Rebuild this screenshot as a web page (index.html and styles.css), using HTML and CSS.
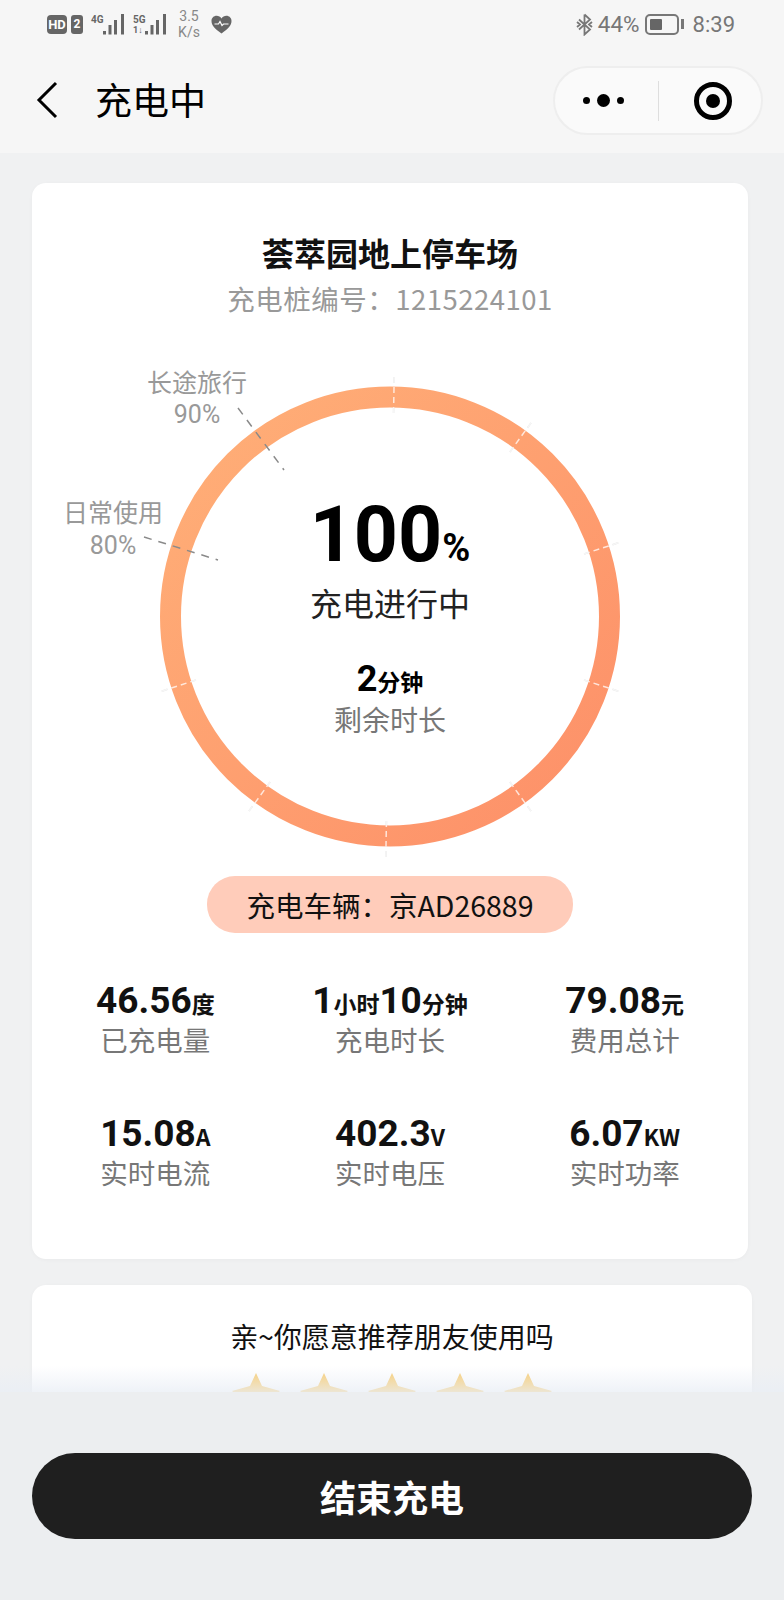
FILE: index.html
```html
<!DOCTYPE html>
<html lang="zh-CN">
<head>
    <meta charset="UTF-8">
    <meta name="viewport" content="width=device-width, initial-scale=1.0">
    <title>充电中</title>
    <link rel="stylesheet" href="styles.css">
</head>
<body>
    <div class="page">
        <header class="top">
            <div class="status">
                <div class="status-left">
                    <span class="badge badge-hd">HD</span>
                    <span class="badge badge-sim">2</span>
                    <span class="signal">
                        <span class="net">4G</span>
                        <svg class="bars" width="22" height="21" viewBox="0 0 22 21"><path d="M0 17h3v3.500H0zM5.500 11h3v9.500h-3zM11 6h3v14.500h-3zM18 0h3v20.500h-3z"/></svg>
                    </span>
                    <span class="signal">
                        <span class="net">5G</span>
                        <span class="net net-arrows">1↓</span>
                        <svg class="bars" width="22" height="21" viewBox="0 0 22 21"><path d="M0 17h3v3.500H0zM5.500 11h3v9.500h-3zM11 6h3v14.500h-3zM18 0h3v20.500h-3z"/></svg>
                    </span>
                    <span class="speed">3.5<br>K/s</span>
                    <svg class="heart" width="21" height="19" viewBox="0 0 21 19"><path d="M10.500 18.500C4 14 .5 10.500.5 6 .5 3 2.800.8 5.600.8c2 0 3.800 1 4.900 2.800C11.600 1.800 13.400.8 15.400.8c2.800 0 5.100 2.200 5.100 5.200 0 4.500-3.500 8-10 12.500z" fill="#666"/><path d="M3.500 9h4l1.500-2.500 2 4 1.500-1.500h5" fill="none" stroke="#fff" stroke-width="1.200"/></svg>
                </div>
                <div class="status-right">
                    <svg class="bt" width="18" height="23" viewBox="0 0 18 23"><path d="M8.500 1.500v20l5.500-5L3 6.500M8.500 1.500l5.500 5L3 16.500" fill="none" stroke="#777" stroke-width="1.800"/><path d="M1 9l3 2.500L1 14M16 9l-3 2.500 3 2.500" fill="none" stroke="#777" stroke-width="1.800"/></svg>
                    <span class="pct">44%</span>
                    <span class="battery"><span class="battery-fill"></span></span>
                    <span class="battery-tip"></span>
                    <span class="clock">8:39</span>
                </div>
            </div>
            <div class="nav">
                <svg class="back" width="22" height="38" viewBox="0 0 22 38"><path d="M20 2 3 19l17 17" fill="none" stroke="#000" stroke-width="3"/></svg>
                <h1 class="nav-title">充电中</h1>
                <div class="capsule">
                    <div class="dots"><i class="dot"></i><i class="dot dot-big"></i><i class="dot"></i></div>
                    <div class="capsule-line"></div>
                    <div class="target"><i class="target-dot"></i></div>
                </div>
            </div>
        </header>

        <section class="card card-main">
            <h2 class="site">荟萃园地上停车场</h2>
            <p class="pile">充电桩编号：1215224101</p>

            <div class="ring-box">
                <svg class="ring" width="716" height="530" viewBox="32 340 716 530">
                    <defs>
                        <linearGradient id="ringColor" x1="0" y1="0" x2="1" y2="1">
                            <stop offset="0" stop-color="#ffb078"/>
                            <stop offset="1" stop-color="#fd8f68"/>
                        </linearGradient>
                        <g id="ticks">
                            <line transform="rotate(1 390 617)" x1="390" y1="377" x2="390" y2="415"/>
                            <line transform="rotate(36 390 617)" x1="390" y1="377" x2="390" y2="415"/>
                            <line transform="rotate(72 390 617)" x1="390" y1="377" x2="390" y2="415"/>
                            <line transform="rotate(108 390 617)" x1="390" y1="377" x2="390" y2="415"/>
                            <line transform="rotate(144 390 617)" x1="390" y1="377" x2="390" y2="415"/>
                            <line transform="rotate(181 390 617)" x1="390" y1="377" x2="390" y2="415"/>
                            <line transform="rotate(216 390 617)" x1="390" y1="377" x2="390" y2="415"/>
                            <line transform="rotate(252 390 617)" x1="390" y1="377" x2="390" y2="415"/>
                        </g>
                    </defs>
                    <use class="ticks-grey" href="#ticks"/>
                    <circle cx="390" cy="616.500" r="219.500" fill="none" stroke="url(#ringColor)" stroke-width="21"/>
                    <use class="ticks-white" href="#ticks"/>

                    <line class="tick-mark" x1="144" y1="537" x2="218" y2="560"/>
                    <line class="tick-mark" x1="238" y1="408" x2="284" y2="470"/>

                    <text class="ring-label" x="197" y="392">长途旅行</text>
                    <text class="ring-label ring-num" x="197" y="423">90%</text>
                    <text class="ring-label" x="113" y="522">日常使用</text>
                    <text class="ring-label ring-num" x="113" y="554">80%</text>
                </svg>
                <div class="ring-center">
                    <div class="percent">100<span class="percent-unit">%</span></div>
                    <div class="percent-text">充电进行中</div>
                    <div class="remain">2<span class="remain-unit">分钟</span></div>
                    <div class="remain-text">剩余时长</div>
                </div>
            </div>

            <div class="plate">充电车辆：京AD26889</div>

            <div class="stats">
                <div class="stat">
                    <div class="stat-value">46.56<small>度</small></div>
                    <div class="stat-label">已充电量</div>
                </div>
                <div class="stat">
                    <div class="stat-value">1<small>小时</small>10<small>分钟</small></div>
                    <div class="stat-label">充电时长</div>
                </div>
                <div class="stat">
                    <div class="stat-value">79.08<small>元</small></div>
                    <div class="stat-label">费用总计</div>
                </div>
                <div class="stat">
                    <div class="stat-value">15.08<small>A</small></div>
                    <div class="stat-label">实时电流</div>
                </div>
                <div class="stat">
                    <div class="stat-value">402.3<small>V</small></div>
                    <div class="stat-label">实时电压</div>
                </div>
                <div class="stat">
                    <div class="stat-value">6.07<small>KW</small></div>
                    <div class="stat-label">实时功率</div>
                </div>
            </div>
        </section>

        <section class="card card-rate">
            <p class="ask">亲~你愿意推荐朋友使用吗</p>
            <div class="stars">
                <svg class="star" viewBox="0 0 48 48"><path d="M24 0l6 13 18 5-12 10 3 16-15-8-15 8 3-16L0 18l18-5z"/></svg>
                <svg class="star" viewBox="0 0 48 48"><path d="M24 0l6 13 18 5-12 10 3 16-15-8-15 8 3-16L0 18l18-5z"/></svg>
                <svg class="star" viewBox="0 0 48 48"><path d="M24 0l6 13 18 5-12 10 3 16-15-8-15 8 3-16L0 18l18-5z"/></svg>
                <svg class="star" viewBox="0 0 48 48"><path d="M24 0l6 13 18 5-12 10 3 16-15-8-15 8 3-16L0 18l18-5z"/></svg>
                <svg class="star" viewBox="0 0 48 48"><path d="M24 0l6 13 18 5-12 10 3 16-15-8-15 8 3-16L0 18l18-5z"/></svg>
            </div>
        </section>

        <div class="bottom">
            <button class="stop">结束充电</button>
        </div>
    </div>
</body>
</html>
```

FILE: styles.css
```css
* {
    box-sizing: border-box;
}
body {
    margin: 0;
    font-family: "Noto Sans CJK SC", Roboto, sans-serif;
    background-color: #f0f1f2;
}
h1, h2, p {
    margin: 0;
    font-weight: normal;
}
.page {
    position: relative;
    width: 784px;
    height: 1600px;
    overflow: hidden;
}

/* top bar */
.top {
    height: 153px;
    background-color: #f6f6f6;
}
.status {
    height: 50px;
    padding: 0 49px 2px 47px;
    display: flex;
    justify-content: space-between;
    align-items: center;
    color: #777;
    font-family: Roboto, sans-serif;
}
.status-left, .status-right {
    display: flex;
    align-items: center;
}
.badge {
    height: 19px;
    background-color: #666;
    color: #fff;
    border-radius: 4px;
    font-size: 13px;
    font-weight: bold;
    line-height: 19px;
    text-align: center;
}
.badge-hd {
    width: 20px;
}
.badge-sim {
    width: 12px;
    margin-left: 4px;
    border-radius: 3px;
    font-size: 12px;
}
.signal {
    position: relative;
    display: flex;
    width: 34px;
    height: 21px;
    margin-left: 8px;
    justify-content: flex-end;
    align-items: flex-end;
}
.net {
    position: absolute;
    left: 0;
    top: 0;
    font-size: 10px;
    font-weight: bold;
    color: #666;
    line-height: 11px;
}
.net-arrows {
    top: 11px;
    font-size: 9px;
    line-height: 10px;
}
.bars {
    fill: #666;
}
.speed {
    width: 24px;
    margin-left: 10px;
    font-size: 14px;
    line-height: 16px;
    text-align: center;
    color: #888;
}
.heart {
    margin-left: 10px;
}
.pct {
    margin-left: 4px;
    font-size: 22.500px;
}
.battery {
    display: block;
    width: 34px;
    height: 21px;
    margin-left: 5px;
    padding: 3px;
    border: 2px solid #777;
    border-radius: 5px;
}
.battery-fill {
    display: block;
    width: 12px;
    height: 100%;
    background-color: #666;
    border-radius: 1px;
}
.battery-tip {
    width: 3px;
    height: 10px;
    margin-left: 2px;
    background-color: #777;
}
.clock {
    margin-left: 9px;
    font-size: 22px;
}
.nav {
    height: 103px;
    padding: 0 21px 0 36px;
    display: flex;
    align-items: center;
}
.back {
    margin-bottom: 3px;
}
.nav-title {
    margin: 0 0 6px 37px;
    font-size: 37px;
    color: #000;
    flex: 1;
}
.capsule {
    width: 210px;
    height: 69px;
    margin-bottom: 2px;
    background-color: #fafafa;
    border: 2px solid #eeeeee;
    border-radius: 35px;
    display: flex;
    align-items: center;
}
.dots {
    width: 103px;
    padding-left: 28px;
    display: flex;
    align-items: center;
    gap: 7px;
}
.dot {
    width: 7px;
    height: 7px;
    border-radius: 50%;
    background-color: #000;
}
.dot-big {
    width: 13px;
    height: 13px;
}
.capsule-line {
    width: 1px;
    height: 40px;
    background-color: #dedede;
}
.target {
    width: 38px;
    height: 38px;
    margin-left: 35px;
    border: 5px solid #000;
    border-radius: 50%;
    display: flex;
    align-items: center;
    justify-content: center;
}
.target-dot {
    width: 14px;
    height: 14px;
    border-radius: 50%;
    background-color: #000;
}

/* cards */
.card {
    background-color: #fff;
    border-radius: 14px;
    margin-left: 32px;
    box-shadow: 0 1px 4px rgba(0, 0, 0, 0.03);
}
.card-main {
    width: 716px;
    margin-top: 30px;
    padding: 49px 6px 68px;
    text-align: center;
}
.site {
    font-size: 32px;
    font-weight: bold;
    line-height: 40px;
    color: #111;
}
.pile {
    margin-top: 8px;
    font-size: 27.500px;
    letter-spacing: 0.5px;
    line-height: 36px;
    color: #999;
}
.ring-box {
    display: grid;
    width: 716px;
    height: 530px;
    margin: 24px 0 0 -6px;
}
.ring, .ring-center {
    grid-area: 1 / 1;
}
.ticks-grey, .ticks-white {
    stroke-width: 1.500;
    stroke-dasharray: 6 4;
}
.ticks-grey {
    stroke: #d9d9d9;
}
.ticks-white {
    stroke: #fff;
    stroke-opacity: 0.75;
}
.tick-mark {
    stroke: #8a8a8a;
    stroke-width: 1.500;
    stroke-dasharray: 8 7;
}
.ring-label {
    font-size: 25px;
    fill: #999;
    text-anchor: middle;
}
.ring-num {
    font-family: Roboto, sans-serif;
}
.ring-center {
    padding-top: 168px;
    display: flex;
    flex-direction: column;
    align-items: center;
}
.percent {
    font-family: Roboto, sans-serif;
    font-size: 77px;
    font-weight: bold;
    line-height: 54px;
    color: #000;
}
.percent-unit {
    font-size: 38px;
}
.percent-text {
    margin-top: 5px;
    font-size: 32px;
    line-height: 44px;
    color: #222;
}
.remain {
    margin-top: 37px;
    font-family: Roboto, sans-serif;
    font-size: 36px;
    font-weight: bold;
    line-height: 36px;
    color: #000;
}
.remain-unit {
    font-family: "Noto Sans CJK SC", sans-serif;
    font-size: 23px;
}
.remain-text {
    font-size: 28px;
    line-height: 40px;
    color: #777;
}
.plate {
    width: 366px;
    height: 57px;
    margin: 6px 0 0 169px;
    background-color: #ffccba;
    border-radius: 28px;
    font-size: 28.500px;
    line-height: 57px;
    color: #111;
    text-align: center;
}
.stats {
    margin-top: 51px;
    display: grid;
    grid-template-columns: repeat(3, 1fr);
    row-gap: 59px;
}
.stat-value {
    font-family: Roboto, sans-serif;
    font-size: 37px;
    font-weight: bold;
    line-height: 34px;
    color: #111;
}
.stat-value small {
    font-family: "Noto Sans CJK SC", sans-serif;
    font-size: 23px;
    font-weight: bold;
}
.stat-label {
    font-size: 27.500px;
    line-height: 38px;
    color: #777;
}
.card-rate {
    width: 720px;
    height: 200px;
    margin-top: 26px;
    padding-top: 33px;
    text-align: center;
}
.ask {
    font-size: 28px;
    line-height: 36px;
    color: #111;
}
.stars {
    margin-top: 19px;
    display: flex;
    justify-content: center;
    gap: 20px;
}
.star {
    width: 48px;
    height: 48px;
    fill: #f9cc6e;
}

/* sticks to the bottom, over the rating card */
.bottom {
    position: absolute;
    left: 0;
    right: 0;
    top: 1392px;
    bottom: 0;
    padding: 61px 32px 0;
    background-color: #eceef0;
}
.bottom::before {
    content: "";
    position: absolute;
    left: 0;
    right: 0;
    top: -26px;
    height: 26px;
    background: linear-gradient(rgba(233, 238, 245, 0), rgba(233, 238, 245, 0.75));
}
.stop {
    display: block;
    width: 100%;
    height: 86px;
    border: none;
    border-radius: 43px;
    background-color: #1f1f1f;
    color: #fff;
    font-family: "Noto Sans CJK SC", sans-serif;
    font-size: 36px;
    font-weight: bold;
}
```
